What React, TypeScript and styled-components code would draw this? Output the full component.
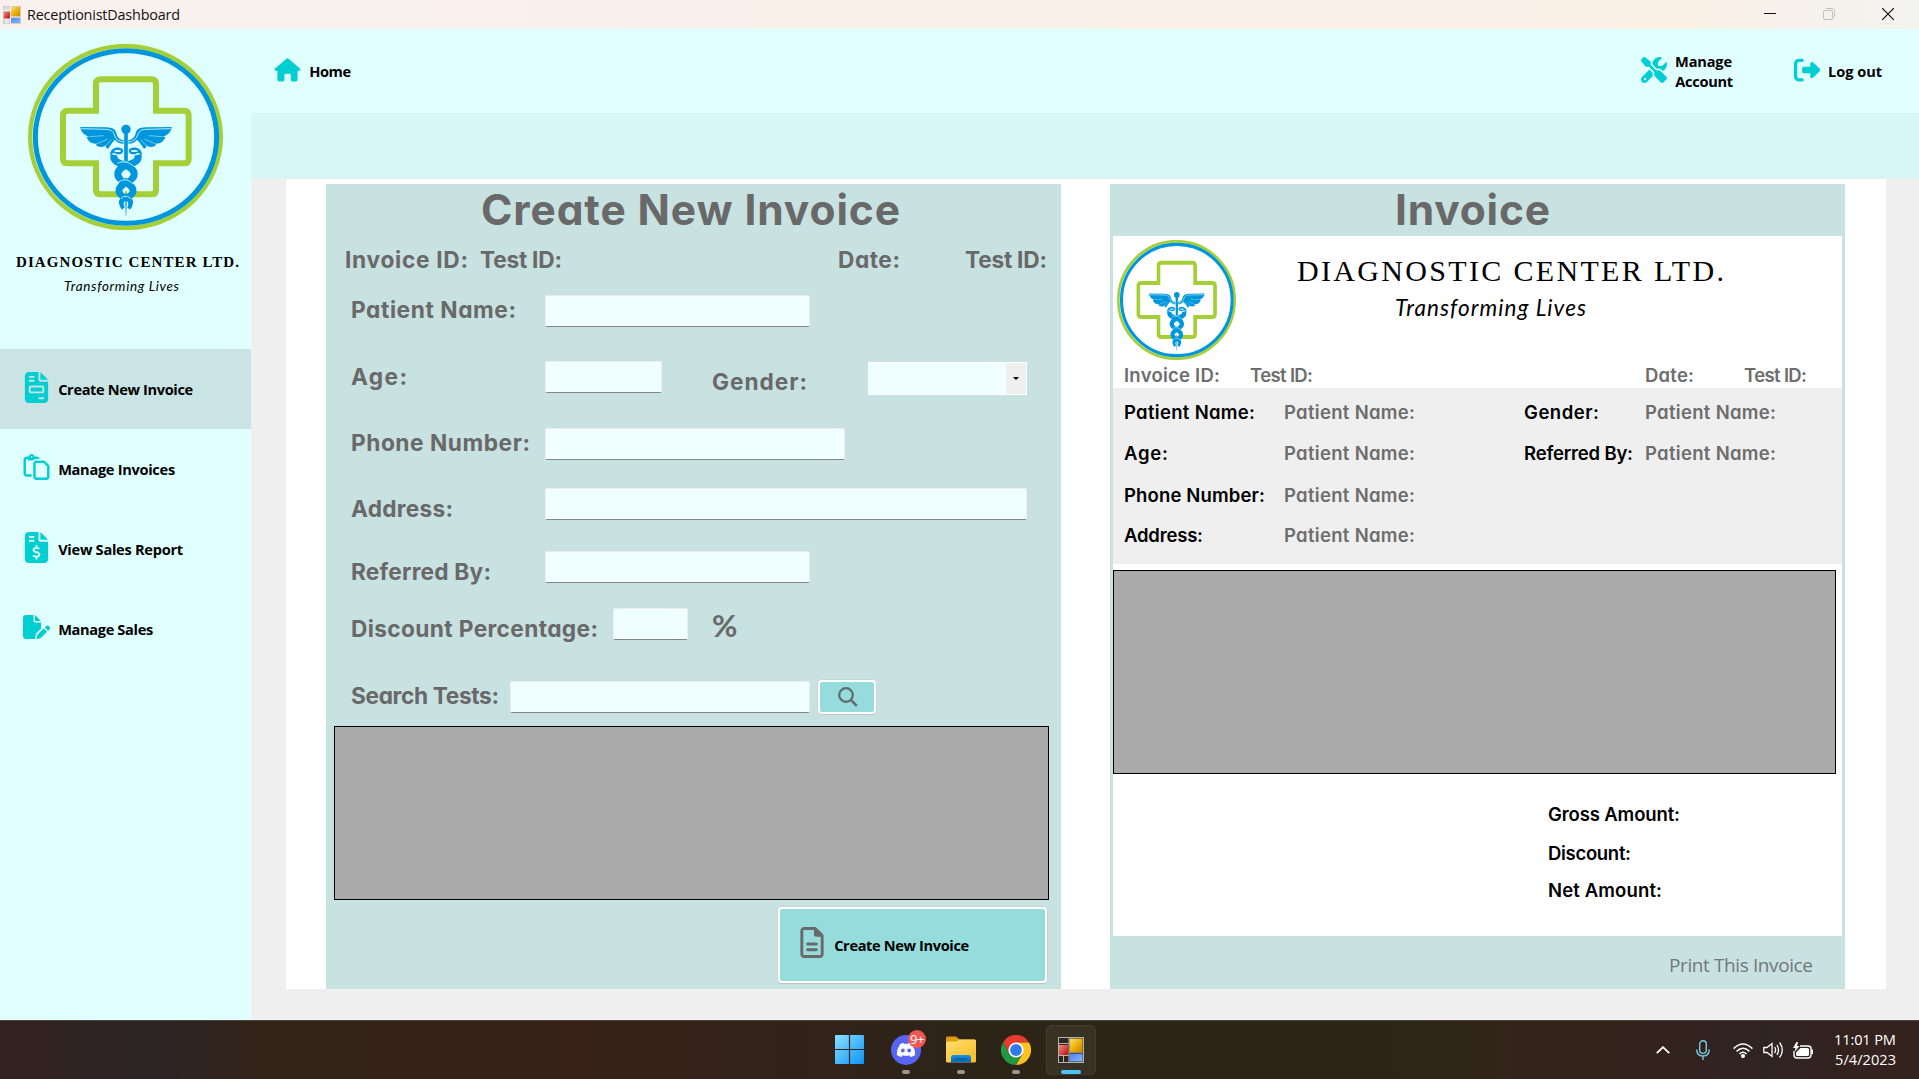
import React, { useLayoutEffect, useRef, useState } from "react";
import styled, { createGlobalStyle } from "styled-components";
import {
  FaFileInvoice,
  FaFileInvoiceDollar,
  FaFilePen,
  FaRegFileLines,
  FaRegPaste,
  FaRightFromBracket,
  FaScrewdriverWrench,
} from "react-icons/fa6";

const GlobalStyle = createGlobalStyle`
  *, *::before, *::after { box-sizing: border-box; }
  html, body { margin: 0; padding: 0; overflow: hidden; }
  body { font-family: "Open Sans", "Noto Sans", sans-serif; color: #000; }
  svg { display: block; flex: none; }
`;

const gothic = `"Century Gothic", Inter, "Open Sans", sans-serif`;
const segoe = `"Segoe UI", "Open Sans", "Noto Sans", sans-serif`;
const roman = `"Felix Titling", "Liberation Serif", serif`;
const script = `"Segoe Print", Lato, "Open Sans", sans-serif`;

/* ---------- text set to a measured width ---------- */

type Face = {
  $size: number;
  $lh: number;
  $w: number;
  $font?: string;
  $weight?: number;
  $color?: string;
  $italic?: boolean;
  $l?: number;
  $t?: number;
};

const TextBox = styled.span<Face>`
  display: block;
  flex: none;
  width: ${(p) => p.$w}px;
  margin-left: ${(p) => p.$l ?? 0}px;
  margin-top: ${(p) => p.$t ?? 0}px;
  font-family: ${(p) => p.$font ?? gothic};
  font-size: ${(p) => p.$size}px;
  line-height: ${(p) => p.$lh}px;
  font-weight: ${(p) => p.$weight ?? 650};
  font-style: ${(p) => (p.$italic ? "italic" : "normal")};
  font-feature-settings: "cv11" 1;
  color: ${(p) => p.$color ?? "#696969"};
  white-space: nowrap;
`;

function Fit({ text, bearing = 0, ...face }: Face & { text: string; bearing?: number }) {
  const ref = useRef<HTMLSpanElement>(null);
  const [spacing, setSpacing] = useState(0);
  useLayoutEffect(() => {
    if (ref.current) {
      const natural = ref.current.getBoundingClientRect().width;
      setSpacing((face.$w + bearing - natural) / (text.length - 1));
    }
  }, [text, face.$w]);
  return (
    <TextBox {...face} style={{ letterSpacing: spacing }}>
      <span ref={ref}>{text}</span>
    </TextBox>
  );
}

/* ---------- drawings ---------- */

function Logo({ width, height }: { width: number; height: number }) {
  const blue = "#0096de";
  const wing =
    "M241 381 L318 382 C340 383 346 389 349 400 C352 412 360 420 371 421 L371 431 C359 431 350 426 345 419 L338 427 L324 446 C319 445 316 441 318 436 C308 443 296 442 287 435 L294 430 C281 433 266 429 260 411 L269 410 C254 407 243 397 241 381 Z";
  return (
    <svg width={width} height={height} viewBox="84 132 585 558" preserveAspectRatio="none">
      <ellipse cx="376.500" cy="411" rx="286" ry="273" fill="none" stroke="#a5cf37" strokeWidth="13" />
      <ellipse cx="378" cy="411" rx="272" ry="259" fill="none" stroke={blue} strokeWidth="15" />
      <path
        d="M297 332 H204 Q189 332 189 346 V476 Q189 490 204 490 H288 V569 Q288 583 302 583 H454 Q468 583 468 569 V490 H552 Q566 490 566 476 V346 Q566 332 552 332 H468 V252 Q468 238 454 238 H302 Q288 238 288 252 V332"
        fill="none"
        stroke="#a5cf37"
        strokeWidth="18"
      />
      <g fill={blue}>
        <path d={wing} />
        <path d={wing} transform="translate(756 0) scale(-1 1)" />
      </g>
      <g fill="none" stroke="#dffefe" strokeWidth="2.500">
        <path d="M244 386 L318 388 C338 389 340 397 344 408 C348 419 358 425 371 426" />
        <path d="M512 386 L438 388 C418 389 416 397 412 408 C408 419 398 425 385 426" />
        <path d="M269 410 L310 407 M294 430 L322 418 M318 436 L334 420" strokeWidth="1.500" />
        <path d="M487 410 L446 407 M462 430 L434 418 M438 436 L422 420" strokeWidth="1.500" />
      </g>
      <path d="M378 395 V484" stroke={blue} strokeWidth="11" />
      <circle cx="378" cy="388" r="14" fill={blue} />
      <g fill="none" stroke={blue}>
        <path d="M342 464 C338 482 352 488 374 495 C396 503 405 515 402 528 C396 545 355 550 357 574 C359 590 389 594 389 607 C388 614 385 619 382 622" strokeWidth="21" />
        <path d="M414 464 C418 482 404 488 382 495 C360 503 351 515 354 528 C360 545 401 550 399 574 C397 590 367 594 367 607 C368 614 371 619 374 622" strokeWidth="21" />
      </g>
      <g fill="none" stroke="#dffefe" strokeWidth="2.500">
        <path d="M352 490 C365 483 388 484 402 500" />
        <path d="M356 546 C370 536 387 538 399 552" />
        <path d="M363 596 C373 585 386 588 393 597" />
      </g>
      <g fill="#dffefe">
        <path d="M375 514 Q366 518 366 525 Q366 533 375 537 Z M381 514 Q390 518 390 525 Q390 533 381 537 Z" />
        <path d="M375 564 Q368 568 368 573 Q368 578 375 582 Z M381 564 Q388 568 388 573 Q388 578 381 582 Z" />
        <path d="M376 602 Q371 606 371 611 Q371 618 376 624 Z M380 602 Q385 606 385 611 Q385 618 380 624 Z" />
      </g>
      <g fill={blue}>
        <path d="M330 464 C331 444 352 438 366 446 C374 452 368 463 356 463 C348 463 346 458 341 459 Z" />
        <path d="M426 464 C425 444 404 438 390 446 C382 452 388 463 400 463 C408 463 410 458 415 459 Z" />
        <path d="M375 620 H381 L379 648 H377 Z" opacity=".6" />
      </g>
      <g fill="#dffefe">
        <ellipse cx="353" cy="453" rx="10" ry="3" />
        <ellipse cx="403" cy="453" rx="10" ry="3" />
      </g>
    </svg>
  );
}

const FormsIcon = ({ size, dark }: { size: number; dark?: boolean }) => (
  <svg width={size} height={size} viewBox="0 0 26 26">
    <defs>
      <linearGradient id="fy" x1="0" y1="0" x2="1" y2="1">
        <stop offset="0" stopColor="#ffe27a" />
        <stop offset=".5" stopColor="#eeb10a" />
        <stop offset="1" stopColor="#c88700" />
      </linearGradient>
      <linearGradient id="fb" x1="0" y1="0" x2="1" y2="1">
        <stop offset="0" stopColor="#4e86ee" />
        <stop offset="1" stopColor="#8ab4ff" />
      </linearGradient>
      <linearGradient id="fr" x1="0" y1="0" x2="1" y2="1">
        <stop offset="0" stopColor="#f58a84" />
        <stop offset="1" stopColor="#b80d0d" />
      </linearGradient>
    </defs>
    <rect x=".5" y=".5" width="25" height="25" fill={dark ? "#2c2820" : "#dcdcdc"} stroke={dark ? "#b4b0aa" : "#c2c2c2"} />
    <path d="M11 0 V26 M0 6.500 H11 M0 18.500 H11 M11 15.800 H26 M5.500 18.500 V26" stroke={dark ? "#b4b0aa" : "#fff"} fill="none" />
    <rect x="11.600" y="1.500" width="13" height="13.500" fill="url(#fy)" />
    <rect x="1" y="8" width="9" height="10" fill="url(#fr)" />
    <rect x="11.600" y="17" width="13" height="7.500" fill="url(#fb)" />
  </svg>
);

const HouseIcon = () => (
  <svg width="27" height="24" viewBox="0 0 27 24" fill="#00ced1">
    <path d="M12.200 .9 Q13.500 -.2 14.800 .9 L26 10.600 Q27 11.700 25.700 12.800 H23.600 V21.300 Q23.600 23.500 21.400 23.500 H18.600 Q16.800 23.500 16.800 21.700 V17 Q16.800 15.800 15.600 15.800 H11.600 Q10.400 15.800 10.400 17 V21.700 Q10.400 23.500 8.600 23.500 H5.600 Q3.400 23.500 3.400 21.300 V12.800 H1.300 Q0 11.700 1 10.600 Z" />
  </svg>
);

const SearchIcon = () => (
  <svg width="20" height="20" viewBox="0 0 20 20" fill="none" stroke="#5f6b6b" strokeWidth="2.200">
    <circle cx="8" cy="8" r="6.800" />
    <path d="M12.800 12.800 L18.800 18.800" strokeWidth="2.600" />
  </svg>
);

const WindowsIcon = () => (
  <svg width="29" height="29" viewBox="0 0 29 29">
    <defs>
      <linearGradient id="win" x1="0" y1="0" x2="1" y2="1">
        <stop offset="0" stopColor="#8be0ff" />
        <stop offset="1" stopColor="#0a94f8" />
      </linearGradient>
    </defs>
    <path fill="url(#win)" d="M1 0 H13.900 V13.900 H0 V1 Q0 0 1 0 Z M15.100 0 H28 Q29 0 29 1 V13.900 H15.100 Z M0 15.100 H13.900 V29 H1 Q0 29 0 28 Z M15.100 15.100 H29 V28 Q29 29 28 29 H15.100 Z" />
  </svg>
);

const DiscordIcon = () => (
  <svg width="30" height="30" viewBox="0 0 30 30">
    <circle cx="15" cy="15" r="15" fill="#5865f2" />
    <path d="M9 9.200 Q11 8.100 12.800 8 L13.400 9 Q15 8.700 16.600 9 L17.200 8 Q19.200 8.100 21 9.200 Q24.400 14.500 24.200 20 Q22 21.700 19.500 22 L18.400 20.200 Q15 21.200 11.600 20.200 L10.500 22 Q8 21.700 5.800 20 Q5.600 14.500 9 9.200 Z" fill="#fff" />
    <ellipse cx="11.800" cy="15.500" rx="1.900" ry="2.100" fill="#5865f2" />
    <ellipse cx="18.200" cy="15.500" rx="1.900" ry="2.100" fill="#5865f2" />
  </svg>
);

const FolderIcon = () => (
  <svg width="30" height="27" viewBox="0 0 30 27">
    <defs>
      <linearGradient id="fold" x1="0" y1="0" x2="1" y2="1">
        <stop offset="0" stopColor="#ffdf77" />
        <stop offset="1" stopColor="#fdbb1f" />
      </linearGradient>
      <linearGradient id="tray" x1="0" y1="0" x2="0" y2="1">
        <stop offset="0" stopColor="#1496e4" />
        <stop offset="1" stopColor="#0865b4" />
      </linearGradient>
    </defs>
    <path d="M0 2 Q0 .5 1.500 .5 H10 L13.500 3.500 H28.500 Q30 3.500 30 5 V10 H0 Z" fill="#e09c06" />
    <path d="M0 7.500 Q0 6.200 1.200 5.600 H10.500 L13 3.500 H28.500 Q30 3.500 30 5 V25 Q30 26.500 28.500 26.500 H1.500 Q0 26.500 0 25 Z" fill="url(#fold)" />
    <path d="M5 26.500 V21.500 Q5 19 7.500 19 H22.500 Q25 19 25 21.500 V26.500 Z" fill="url(#tray)" />
    <path d="M8.500 23 H21.500" stroke="#084a88" />
  </svg>
);

const ChromeIcon = () => (
  <svg width="30" height="30" viewBox="0 0 30 30">
    <path d="M2 7.500 A15 15 0 0 1 28 7.500 H15 L8.500 18.700 Z" fill="#e93a30" />
    <path d="M28 7.500 A15 15 0 0 1 15 30 L21.500 18.700 L15 7.500 Z" fill="#fcc31e" />
    <path d="M15 30 A15 15 0 0 1 2 7.500 L8.500 18.700 L21.500 18.700 Z" fill="#249744" />
    <circle cx="15" cy="15" r="7.600" fill="#fff" />
    <circle cx="15" cy="15" r="5.900" fill="#2f7be8" />
  </svg>
);

/* ---------- window chrome ---------- */

const Screen = styled.div`
  width: 1919px;
  height: 1079px;
  display: flex;
  flex-direction: column;
  background: #efefef;
`;

const TitleBar = styled.header`
  height: 29px;
  flex: none;
  display: flex;
  align-items: center;
  padding: 0 25px 0 3px;
  background: linear-gradient(90deg, #f8f1ee 0%, #f9f0ea 40%, #faf0e6 88%, #f4f2ec 96%, #f3f3f1 100%);
`;

const WindowControls = styled.div`
  margin: 0 0 1px auto;
  display: flex;
  align-items: center;
  gap: 47px;
`;

const Body = styled.div`
  height: 991px;
  flex: none;
  display: flex;
`;

/* ---------- sidebar ---------- */

const Sidebar = styled.aside`
  width: 251px;
  flex: none;
  background: #e0ffff;
`;

const Brand = styled.div`
  height: 320px;
  padding: 15px 0 0;
  display: flex;
  flex-direction: column;
`;

const BrandMark = styled.div`
  margin-left: 28px;
`;

const NavItem = styled.button<{ $active?: boolean }>`
  width: 100%;
  height: 80px;
  border: 0;
  padding: 0 0 0 23px;
  display: flex;
  align-items: center;
  gap: 8px;
  background: ${(p) => (p.$active ? "#cae4e5" : "transparent")};
`;

const NavIcon = styled.span`
  width: 27px;
  height: 32px;
  display: flex;
  align-items: center;
  justify-content: center;
  color: #00ced1;
  & > svg { width: 27px; }
`;

const TallIcon = styled(NavIcon)`
  margin-bottom: 4px;
  & > svg { height: 31px; }
`;

const WideIcon = styled(NavIcon)`
  margin-bottom: 4px;
  & > svg { height: 26px; }
`;

/* ---------- main area ---------- */

const Main = styled.main`
  flex: 1;
  display: flex;
  flex-direction: column;
`;

const TopBar = styled.nav`
  height: 84px;
  flex: none;
  display: flex;
  align-items: center;
  background: #e0ffff;
  padding: 0 37px 0 23px;
`;

const TopLink = styled.button<{ $l?: string; $gap: number }>`
  margin-left: ${(p) => p.$l ?? 0};
  border: 0;
  padding: 0;
  background: none;
  display: flex;
  align-items: center;
  gap: ${(p) => p.$gap}px;
`;

const TopIcon = styled.span`
  color: #00ced1;
  margin-bottom: 3px;
`;

const Stack = styled.span`
  display: flex;
  flex-direction: column;
`;

const Strip = styled.div`
  height: 66px;
  flex: none;
  background: #d8f6f6;
`;

const Sheet = styled.section`
  width: 1600px;
  height: 810px;
  margin-left: 35px;
  padding: 5px 41px 0 40px;
  display: flex;
  justify-content: space-between;
  background: #fff;
`;

const Panel = styled.div`
  width: 735px;
  height: 805px;
  background: #c8e1e1;
`;

const Row = styled.div<{ $h: number }>`
  height: ${(p) => p.$h}px;
  display: flex;
  align-items: flex-start;
`;

const Input = styled.input<{ $w: number; $l: number }>`
  width: ${(p) => p.$w}px;
  height: 32px;
  flex: none;
  margin: 11px 0 0 ${(p) => p.$l}px;
  padding: 0 6px;
  border: 1px solid #f0eaea;
  border-bottom: 1px solid #868686;
  border-radius: 2px;
  background: #f0ffff;
  outline: 0;
`;

const Combo = styled.div`
  width: 159px;
  height: 33px;
  margin: 12px 0 0 62px;
  display: flex;
  justify-content: flex-end;
  border: 1px solid #fff;
  background: #f0ffff;
`;

const ComboButton = styled.span`
  width: 20px;
  display: flex;
  align-items: center;
  justify-content: center;
  background: #efefef;
`;

const ActionButton = styled.button<{ $w: number; $h: number; $l: number; $t: number; $pad: string }>`
  width: ${(p) => p.$w}px;
  height: ${(p) => p.$h}px;
  margin: ${(p) => p.$t}px 0 0 ${(p) => p.$l}px;
  padding: ${(p) => p.$pad};
  display: flex;
  align-items: center;
  border: 2px solid #fff;
  border-radius: 4px;
  background: #96dcdc;
  box-shadow: 0 0 0 .5px #c4caca, 0 1px 0 #b8bcbc;
`;

const DocIcon = styled.span`
  margin: 0 7px 6px 0;
  color: #696969;
  & > svg { width: 30px; height: 31px; }
`;

const DataGrid = styled.div<{ $w: number; $h: number; $l?: number; $t?: number }>`
  width: ${(p) => p.$w}px;
  height: ${(p) => p.$h}px;
  margin: ${(p) => p.$t ?? 0}px 0 0 ${(p) => p.$l ?? 0}px;
  border: 1px solid #000;
  background: #ababab;
`;

const Paper = styled.div`
  width: 729px;
  height: 700px;
  margin-left: 3px;
  background: #fff;
`;

const Letterhead = styled.div`
  height: 124px;
  padding: 4px 0 0 4px;
  display: flex;
`;

const Details = styled.div`
  height: 176px;
  padding-top: 14px;
  background: #efefef;
`;

/* ---------- taskbar ---------- */

const Taskbar = styled.footer`
  height: 59px;
  flex: none;
  display: flex;
  align-items: flex-start;
  padding: 4px 23px 0 826px;
  border-top: 1px solid #4a4440;
  background: linear-gradient(90deg, #33221f 0%, #2b2424 8%, #322319 13%, #372116 30%, #33221a 38%, #2d2418 50%, #2c2517 72%, #33241a 80%, #33221c 86%, #302423 92%, #33221d 97%);
`;

const Apps = styled.div`
  display: flex;
  gap: 5px;
`;

const AppTile = styled.div<{ $active?: boolean; $shift?: number }>`
  position: relative;
  width: 50px;
  height: 50px;
  display: flex;
  align-items: center;
  justify-content: center;
  padding-right: ${(p) => p.$shift ?? 0}px;
  border-radius: 5px;
  border: 1px solid ${(p) => (p.$active ? "#423c30" : "transparent")};
  background: ${(p) => (p.$active ? "#383225" : "transparent")};
  & > svg { margin-top: -1px; }
`;

const Indicator = styled.i<{ $active?: boolean }>`
  position: absolute;
  bottom: 0;
  left: 50%;
  transform: translateX(-50%);
  width: ${(p) => (p.$active ? 20 : 8)}px;
  height: 4px;
  border-radius: 2px;
  background: ${(p) => (p.$active ? "#4cc2ff" : "#9d958e")};
`;

const Badge = styled.b`
  position: absolute;
  top: 4px;
  right: 4px;
  width: 18px;
  height: 18px;
  border-radius: 9px;
  background: #f05656;
  color: #fff;
  font: 400 13px/18px "Open Sans", sans-serif;
  text-align: center;
  letter-spacing: -0.5px;
`;

const Tray = styled.div`
  margin-left: auto;
  height: 50px;
  display: flex;
  align-items: center;
`;

const TrayGlyph = styled.span<{ $l?: number }>`
  margin-left: ${(p) => p.$l ?? 0}px;
`;

const Clock = styled.div`
  margin-left: 20px;
  margin-top: -3px;
`;

/* ---------- pieces ---------- */

const FormLabel = ({ text, l, t, w }: { text: string; l: number; t: number; w: number }) => (
  <Fit text={text} bearing={1} $l={l - 1} $t={t} $w={w + 1} $size={22.7} $lh={24} />
);

const PaperLabel = ({ text, l, t = 0, w, dark }: { text: string; l: number; t?: number; w: number; dark?: boolean }) => (
  <Fit text={text} $l={l - 1} $t={t} $w={w + 1} $size={18.5} $lh={20} $weight={600} $color={dark ? "#000" : "#6d6d6d"} />
);

const Bold = ({ text, w }: { text: string; w: number }) => (
  <Fit text={text} $w={w} $size={14.6} $lh={20} $font={segoe} $weight={700} $color="#000" />
);

export default function App() {
  return (
    <>
      <GlobalStyle />
      <Screen>
        <TitleBar>
          <FormsIcon size={18} />
          <Fit text="ReceptionistDashboard" $l={6} $w={153} $size={14.4} $lh={20} $font={segoe} $weight={400} $color="#111" />
          <WindowControls>
            <svg width="12" height="12" viewBox="0 0 12 12"><path d="M0 5.500 H12" stroke="#111" /></svg>
            <svg width="12" height="12" viewBox="0 0 12 12" fill="none" stroke="#c3c0bc">
              <rect x=".5" y="2.500" width="9" height="9" rx="1.500" />
              <path d="M3 .5 H9 Q11.500 .5 11.500 3 V9" />
            </svg>
            <svg width="12" height="12" viewBox="0 0 12 12"><path d="M0 0 L12 12 M12 0 L0 12" stroke="#111" strokeWidth="1.200" /></svg>
          </WindowControls>
        </TitleBar>

        <Body>
          <Sidebar>
            <Brand>
              <BrandMark><Logo width={195} height={186} /></BrandMark>
              <Fit text="DIAGNOSTIC CENTER LTD." $l={16} $t={22} $w={223} $size={15} $lh={20} $font={roman} $weight={700} $color="#000" />
              <Fit text="Transforming Lives" $l={64} $t={5} $w={115} $size={13.5} $lh={18} $font={script} $weight={400} $italic $color="#000" />
            </Brand>
            <NavItem $active>
              <TallIcon><FaFileInvoice /></TallIcon>
              <Bold text="Create New Invoice" w={135} />
            </NavItem>
            <NavItem>
              <WideIcon><FaRegPaste /></WideIcon>
              <Bold text="Manage Invoices" w={117} />
            </NavItem>
            <NavItem>
              <TallIcon><FaFileInvoiceDollar /></TallIcon>
              <Bold text="View Sales Report" w={125} />
            </NavItem>
            <NavItem>
              <WideIcon><FaFilePen /></WideIcon>
              <Bold text="Manage Sales" w={95} />
            </NavItem>
          </Sidebar>

          <Main>
            <TopBar>
              <TopLink $gap={8}>
                <TopIcon><HouseIcon /></TopIcon>
                <Bold text="Home" w={42} />
              </TopLink>
              <TopLink $gap={8} $l="auto">
                <TopIcon><FaScrewdriverWrench size={26} /></TopIcon>
                <Stack>
                  <Bold text="Manage" w={57} />
                  <Bold text="Account" w={58} />
                </Stack>
              </TopLink>
              <TopLink $gap={8} $l="61px">
                <TopIcon><FaRightFromBracket size={26} /></TopIcon>
                <Bold text="Log out" w={54} />
              </TopLink>
            </TopBar>
            <Strip />
            <Sheet>
              <Panel>
                <Row $h={57}>
                  <Fit text="Create New Invoice" $l={155} $t={3} $w={419} $size={42.5} $lh={46} />
                </Row>
                <Row $h={43}>
                  <FormLabel text="Invoice ID:" l={20} t={7} w={121} />
                  <FormLabel text="Test ID:" l={14} t={7} w={80} />
                  <FormLabel text="Date:" l={278} t={7} w={60} />
                  <FormLabel text="Test ID:" l={67} t={7} w={80} />
                </Row>
                <Row $h={66}>
                  <FormLabel text="Patient Name:" l={26} t={14} w={163} />
                  <Input $l={30} $w={265} />
                </Row>
                <Row $h={67}>
                  <FormLabel text="Age:" l={26} t={15} w={54} />
                  <Input $l={139} $w={117} />
                  <FormLabel text="Gender:" l={51} t={20} w={93} />
                  <Combo>
                    <ComboButton>
                      <svg width="6" height="3" viewBox="0 0 6 3"><path d="M0 0 H6 L3 3 Z" /></svg>
                    </ComboButton>
                  </Combo>
                </Row>
                <Row $h={60}>
                  <FormLabel text="Phone Number:" l={26} t={14} w={177} />
                  <Input $l={16} $w={300} />
                </Row>
                <Row $h={63}>
                  <FormLabel text="Address:" l={26} t={20} w={100} />
                  <Input $l={93} $w={482} />
                </Row>
                <Row $h={57}>
                  <FormLabel text="Referred By:" l={26} t={20} w={138} />
                  <Input $l={55} $w={265} />
                </Row>
                <Row $h={73}>
                  <FormLabel text="Discount Percentage:" l={26} t={20} w={245} />
                  <Input $l={16} $w={75} />
                  <TextBox $l={24} $t={12} $w={26} $size={31} $lh={32} $weight={700} $font="Lato, sans-serif">%</TextBox>
                </Row>
                <Row $h={56}>
                  <FormLabel text="Search Tests:" l={26} t={14} w={146} />
                  <Input $l={12} $w={300} />
                  <ActionButton $w={58} $h={34} $l={8} $t={10} $pad="0 0 1px 18px">
                    <SearchIcon />
                  </ActionButton>
                </Row>
                <DataGrid $w={715} $h={174} $l={8} />
                <ActionButton $w={269} $h={76} $l={452} $t={7} $pad="0 0 0 17px">
                  <DocIcon><FaRegFileLines /></DocIcon>
                  <Bold text="Create New Invoice" w={135} />
                </ActionButton>
              </Panel>

              <Panel>
                <Row $h={52}>
                  <Fit text="Invoice" $l={285} $t={3} $w={155} $size={42.5} $lh={46} />
                </Row>
                <Paper>
                  <Letterhead>
                    <Logo width={119} height={120} />
                    <Stack>
                      <Fit text="DIAGNOSTIC CENTER LTD." $l={61} $t={13} $w={427} $size={30} $lh={36} $font={roman} $weight={400} $color="#000" />
                      <Fit text="Transforming Lives" $l={159} $t={4} $w={191} $size={22.5} $lh={30} $font={script} $weight={400} $italic $color="#000" />
                    </Stack>
                  </Letterhead>
                  <Row $h={28}>
                    <PaperLabel text="Invoice ID:" l={12} t={5} w={95} />
                    <PaperLabel text="Test ID:" l={31} t={5} w={62} />
                    <PaperLabel text="Date:" l={333} t={5} w={48} />
                    <PaperLabel text="Test ID:" l={51} t={5} w={62} />
                  </Row>
                  <Details>
                    <Row $h={41}>
                      <PaperLabel dark text="Patient Name:" l={12} w={130} />
                      <PaperLabel text="Patient Name:" l={30} w={130} />
                      <PaperLabel dark text="Gender:" l={110} w={74} />
                      <PaperLabel text="Patient Name:" l={47} w={130} />
                    </Row>
                    <Row $h={42}>
                      <PaperLabel dark text="Age:" l={12} w={43} />
                      <PaperLabel text="Patient Name:" l={117} w={130} />
                      <PaperLabel dark text="Referred By:" l={110} w={108} />
                      <PaperLabel text="Patient Name:" l={13} w={130} />
                    </Row>
                    <Row $h={40}>
                      <PaperLabel dark text="Phone Number:" l={12} w={140} />
                      <PaperLabel text="Patient Name:" l={20} w={130} />
                    </Row>
                    <Row $h={39}>
                      <PaperLabel dark text="Address:" l={12} w={78} />
                      <PaperLabel text="Patient Name:" l={82} w={130} />
                    </Row>
                  </Details>
                  <DataGrid $w={723} $h={204} $t={6} />
                  <Row $h={69}>
                    <PaperLabel dark text="Gross Amount:" l={436} t={30} w={131} />
                  </Row>
                  <Row $h={37}>
                    <PaperLabel dark text="Discount:" l={436} w={82} />
                  </Row>
                  <Row $h={30}>
                    <PaperLabel dark text="Net Amount:" l={436} w={113} />
                  </Row>
                </Paper>
                <Row $h={53}>
                  <Fit text="Print This Invoice" $l={559} $t={16} $w={144} $size={19} $lh={26} $font={segoe} $weight={400} $color="#737879" />
                </Row>
              </Panel>
            </Sheet>
          </Main>
        </Body>

        <Taskbar>
          <Apps>
            <AppTile $shift={3}><WindowsIcon /></AppTile>
            <AppTile><DiscordIcon /><Badge>9+</Badge><Indicator /></AppTile>
            <AppTile><FolderIcon /><Indicator /></AppTile>
            <AppTile><ChromeIcon /><Indicator /></AppTile>
            <AppTile $active><FormsIcon size={26} dark /><Indicator $active /></AppTile>
          </Apps>
          <Tray>
            <TrayGlyph>
              <svg width="14" height="8" viewBox="0 0 14 8" fill="none" stroke="#fff" strokeWidth="1.800"><path d="M.8 7.200 L7 1.200 L13.200 7.200" /></svg>
            </TrayGlyph>
            <TrayGlyph $l={26}>
              <svg width="14" height="20" viewBox="0 0 14 20" fill="none" stroke="#76cbe4" strokeWidth="1.400">
                <rect x="3.700" y=".8" width="6.600" height="12.600" rx="3.300" />
                <path d="M.8 9.500 Q.8 16 7 16 Q13.200 16 13.200 9.500 M7 16 V20" />
              </svg>
            </TrayGlyph>
            <TrayGlyph $l={23}>
              <svg width="20" height="15" viewBox="0 0 20 15" fill="none" stroke="#fff" strokeWidth="1.500">
                <path d="M.6 5.600 Q10 -3.600 19.400 5.600 M3.600 8.400 Q10 2.200 16.400 8.400 M6.400 11 Q10 7.600 13.600 11" />
                <circle cx="10" cy="13" r="1.300" fill="#fff" />
              </svg>
            </TrayGlyph>
            <TrayGlyph $l={10}>
              <svg width="21" height="18" viewBox="0 0 21 18" fill="none" stroke="#fff" strokeWidth="1.300">
                <path d="M.8 6.500 H4 L9 2.500 V15.500 L4 11.500 H.8 Z M11.600 6 Q13.600 9 11.600 12 M14 4 Q17 9 14 14 M16.600 1.500 Q22 9 16.600 16.500" />
              </svg>
            </TrayGlyph>
            <TrayGlyph $l={9}>
              <svg width="21" height="17" viewBox="0 0 21 17">
                <path d="M7 4 H15 Q18 4 18 6.500 V13 Q18 16 15 16 H4 Q1 16 1 13 V9" fill="none" stroke="#fff" strokeWidth="1.400" />
                <path d="M7.500 6 H14.500 Q16 6 16 7.500 V12.500 Q16 14 14.500 14 H4.500 Q3 14 3 12.500 V10.500 Z M18.500 7.500 H20 V12 H18.500 Z" fill="#fff" />
                <path d="M3.500 0 L0 6 H2.500 L1.500 10 L6.500 4 H4 L5 0 Z" fill="#fff" />
              </svg>
            </TrayGlyph>
            <Clock>
              <Fit text="11:01 PM" $w={62} $size={14.6} $lh={20} $font={segoe} $weight={400} $color="#fff" />
              <Fit text="5/4/2023" $w={61} $l={1} $size={14.6} $lh={20} $font={segoe} $weight={400} $color="#fff" />
            </Clock>
          </Tray>
        </Taskbar>
      </Screen>
    </>
  );
}
